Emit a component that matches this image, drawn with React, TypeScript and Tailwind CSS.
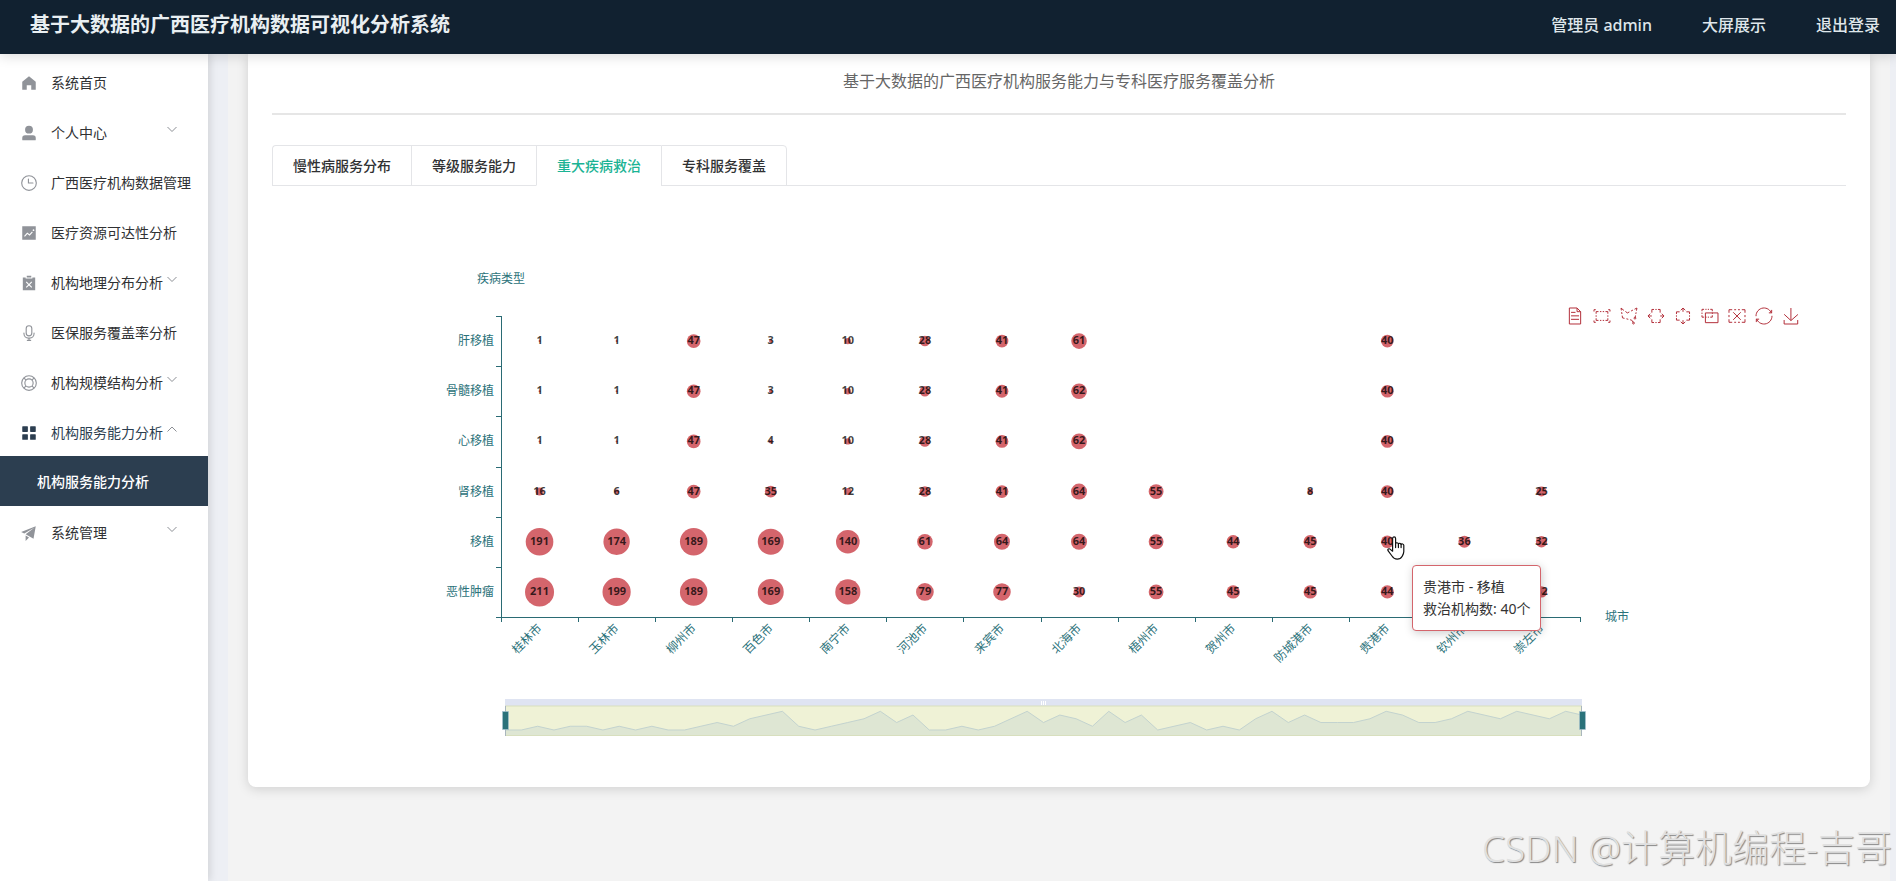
import { useState } from "react";
import type { ReactNode } from "react";
import clsx from "clsx";

const CITIES = [
  "桂林市", "玉林市", "柳州市", "百色市", "南宁市", "河池市", "来宾市",
  "北海市", "梧州市", "贺州市", "防城港市", "贵港市", "钦州市", "崇左市",
];

const DISEASES = ["恶性肿瘤", "移植", "肾移植", "心移植", "骨髓移植", "肝移植"];

// one row per city, values in the order of DISEASES
const COUNTS: (number | null)[][] = [
  [211, 191, 16, 1, 1, 1],
  [199, 174, 6, 1, 1, 1],
  [189, 189, 47, 47, 47, 47],
  [169, 169, 35, 4, 3, 3],
  [158, 140, 12, 10, 10, 10],
  [79, 61, 28, 28, 28, 28],
  [77, 64, 41, 41, 41, 41],
  [30, 64, 64, 62, 62, 61],
  [55, 55, 55, null, null, null],
  [45, 44, null, null, null, null],
  [45, 45, 8, null, null, null],
  [44, 40, 40, 40, 40, 40],
  [null, 36, null, null, null, null],
  [32, 32, 25, null, null, null],
];

// overview line inside the zoom slider
const OVERVIEW = [
  0, 0, 1, 0, 1, 1, 0, 1, 0, 1, 0, 0, 1, 2, 1, 3, 4, 5, 1, 0, 1, 2, 3, 5, 2, 4,
  0, 0, 1, 0, 1, 3, 5, 2, 4, 3, 1, 5, 2, 4, 0, 1, 2, 0, 1, 0, 3, 5, 2, 4, 2, 2,
  2, 3, 5, 4, 2, 2, 3, 5, 4, 3, 5, 4, 3, 5, 4,
];

const GRID = { left: 229, right: 1308, top: 114, bottom: 415 };
const SLIDER = { left: 233, right: 1310, top: 504, bottom: 534 };

const TABS = ["慢性病服务分布", "等级服务能力", "重大疾病救治", "专科服务覆盖"];

const TOOLS = [
  {
    label: "数据视图",
    viewBox: "11.5 2 39.5 56",
    path: "M17.5,17.3H33 M45.4,29.5h-28 M11.5,2v56H51V14.8L38.4,2H11.5z M38.4,2.2v12.7H51 M45.4,41.7h-28",
  },
  {
    label: "矩形选择",
    viewBox: "0.4 -0.2 89.2 70.4",
    path: "M0.4,10V-0.2h9.8 M89.6,10V-0.2h-9.8 M0.4,60v10.2h9.8 M89.6,60v10.2h-9.8 M12.3,22.4V10.5h13.1 M33.6,10.5h7.8 M49.1,10.5h7.8 M77.5,22.4V10.5h-13 M12.3,31.1v8.2 M77.7,31.1v8.2 M12.3,47.6v11.9h13.1 M33.6,59.5h7.6 M49.1,59.5h7.7 M77.5,47.6v11.9h-13",
  },
  {
    label: "圈选",
    viewBox: "9.7 4.8 52 52.4",
    path: "M55.2,34.9c1.7,0,3.1,1.4,3.1,3.1s-1.4,3.1-3.1,3.1s-3.1-1.4-3.1-3.1S53.5,34.9,55.2,34.9z M50.4,51c1.7,0,3.1,1.4,3.1,3.1c0,1.7-1.4,3.1-3.1,3.1c-1.7,0-3.1-1.4-3.1-3.1C47.3,52.4,48.7,51,50.4,51z M55.6,37.1l1.5-7.8 M60.1,13.5l1.6-8.7l-7.8,4 M59,19l-1,5.3 M24,16.1l6.4,4.9l6.4-3.3 M48.5,11.6l-5.9,3.1 M19.1,12.8L9.7,5.1l1.1,7.7 M13.4,29.8l1,7.3l6.6,1.6 M11.6,18.4l1,6.1 M27.3,40.2l6.1,1.6 M49.9,52.1l-5.6-7.6l-4.9-1.2",
  },
  {
    label: "横向选择",
    viewBox: "3.1 1.9 68.8 56.2",
    path: "M19.7,15.6V1.9H29 M34.8,1.9H40.4 M55.3,15.6V1.9H45.9 M19.7,44.4V58.1H29 M34.8,58.1H40.4 M55.3,44.4V58.1H45.9 M12.5,20.3l-9.4,9.6l9.6,9.8 M3.1,29.9h16.5 M62.5,20.3l9.4,9.6L62.3,39.7 M71.9,29.9H55.4",
  },
  {
    label: "纵向选择",
    viewBox: "11.8 -3.9 54.1 66.2",
    path: "M52.7,12h13.2v9 M65.9,26.6V32 M52.7,46.3h13.2v-9 M24.9,12H11.8v9 M11.8,26.6V32 M24.9,46.3H11.8v-9 M48.2,5.1l-9.3-9l-9.4,9.2 M38.9-3.9V12 M48.2,53.3l-9.3,9l-9.4-9.2 M38.9,62.3V46.4",
  },
  {
    label: "保持选择",
    viewBox: "4 1 79.9 66.5",
    path: "M4,10.5V1h10.3 M20.7,1h6.1 M33,1h6.1 M55.4,10.5V1H45.2 M4,17.3v6.6 M55.6,17.3v6.6 M4,30.5V40h10.3 M20.7,40h6.1 M33,40h6.1 M55.4,30.5V40H45.2 M21,18.9h62.9v48.6H21V18.9z",
  },
  {
    label: "清除选择",
    viewBox: "4.7 4.2 65.6 51.6",
    path: "M22,14.7l30.9,31 M52.9,14.7L22,45.7 M4.7,16.8V4.2h13.1 M26,4.2h7.8 M41.6,4.2h7.8 M70.3,16.8V4.2H57.2 M4.7,25.9v8.6 M70.3,25.9v8.6 M4.7,43.2v12.6h13.1 M26,55.8h7.8 M41.6,55.8h7.8 M70.3,43.2v12.6H57.2",
  },
  {
    label: "还原",
    viewBox: "2.1 2 55.8 56",
    path: "M47,18.9h9.8V8.7 M56.3,20.1C52.1,9,40.5,0.6,26.8,2.1C12.6,3.7,1.6,16.2,2.1,30.6 M13,41.1H3.1v10.2 M3.7,39.9c4.2,11.1,15.8,19.5,29.5,18c14.2-1.6,25.2-14.1,24.7-28.5",
  },
  {
    label: "保存为图片",
    viewBox: "0.5 0 58 58",
    path: "M4.7,22.9L29.3,45.5L54.7,23.4M4.6,43.6L4.6,58L53.8,58L53.8,43.6M29.2,45.1L29.2,0",
  },
];

interface MenuEntry {
  label: string;
  icon: ReactNode;
  arrow?: "down" | "up";
  children?: string[];
}

const MENU: MenuEntry[] = [
  {
    label: "系统首页",
    icon: <path d="M512 128 128 447.936V896h255.936V640H640v256h255.936V447.936z" />,
  },
  {
    label: "个人中心",
    icon: (
      <path d="M288 320a224 224 0 1 0 448 0 224 224 0 1 0-448 0m544 608H160a32 32 0 0 1-32-32v-96a160 160 0 0 1 160-160h448a160 160 0 0 1 160 160v96a32 32 0 0 1-32 32z" />
    ),
    arrow: "down",
  },
  {
    label: "广西医疗机构数据管理",
    icon: (
      <g fill="none" stroke="currentColor" strokeWidth="64" strokeLinecap="round">
        <circle cx="512" cy="512" r="416" />
        <path d="M480 288v224h256" />
      </g>
    ),
  },
  {
    label: "医疗资源可达性分析",
    icon: (
      <path d="M128 896V128h768v768zm291.712-327.296 128 102.4 180.16-201.792-47.744-42.624-139.84 156.608-128-102.4-180.16 201.792 47.744 42.624 139.84-156.608zM816 352a48 48 0 1 0-96 0 48 48 0 0 0 96 0" />
    ),
  },
  {
    label: "机构地理分布分析",
    icon: (
      <path d="m557.248 608 135.744-135.744-45.248-45.248-135.68 135.744-135.808-135.68-45.248 45.184L466.752 608l-135.68 135.68 45.184 45.312L512 653.248l135.744 135.744 45.248-45.248L557.312 608zM704 192h160v736H160V192h160v64h384zm-320 0V96h256v96z" />
    ),
    arrow: "down",
  },
  {
    label: "医保服务覆盖率分析",
    icon: (
      <path d="M512 128a128 128 0 0 0-128 128v256a128 128 0 1 0 256 0V256a128 128 0 0 0-128-128m0-64a192 192 0 0 1 192 192v256a192 192 0 1 1-384 0V256A192 192 0 0 1 512 64m-32 832v-64a288 288 0 0 1-288-288v-32a32 32 0 0 1 64 0v32a224 224 0 0 0 224 224h64a224 224 0 0 0 224-224v-32a32 32 0 1 1 64 0v32a288 288 0 0 1-288 288v64h64a32 32 0 1 1 0 64H416a32 32 0 1 1 0-64z" />
    ),
  },
  {
    label: "机构规模结构分析",
    icon: (
      <g fill="none" stroke="currentColor" strokeWidth="64">
        <circle cx="512" cy="512" r="416" />
        <circle cx="512" cy="512" r="236" />
        <path d="M218 218l127 127M806 218L679 345M218 806l127-127M806 806L679 679" />
      </g>
    ),
    arrow: "down",
  },
  {
    label: "机构服务能力分析",
    icon: (
      <path d="M160 448a32 32 0 0 1-32-32V160a32 32 0 0 1 32-32h256a32 32 0 0 1 32 32v256a32 32 0 0 1-32 32zm448 0a32 32 0 0 1-32-32V160a32 32 0 0 1 32-32h256a32 32 0 0 1 32 32v256a32 32 0 0 1-32 32zM160 896a32 32 0 0 1-32-32V608a32 32 0 0 1 32-32h256a32 32 0 0 1 32 32v256a32 32 0 0 1-32 32zm448 0a32 32 0 0 1-32-32V608a32 32 0 0 1 32-32h256a32 32 0 0 1 32 32v256a32 32 0 0 1-32 32z" />
    ),
    arrow: "up",
    children: ["机构服务能力分析"],
  },
  {
    label: "系统管理",
    icon: (
      <path d="m64 448 832-320-128 704-446.08-243.328L832 192 242.816 545.472zm256 512V657.024L512 768z" />
    ),
    arrow: "down",
  },
];

function Header() {
  return (
    <header className="relative z-10 flex h-[54px] shrink-0 items-center justify-between bg-[#112130] pr-4 pb-1 pl-[30px] text-[#dfe6ea] shadow-[0_2px_12px_rgba(0,0,0,0.15)]">
      <h1 className="text-xl font-bold text-[#e9eff2]">
        基于大数据的广西医疗机构数据可视化分析系统
      </h1>
      <nav className="flex gap-[50px] text-base font-medium">
        <button type="button">管理员 admin</button>
        <a href="#screen">大屏展示</a>
        <a href="#logout">退出登录</a>
      </nav>
    </header>
  );
}

function Sidebar() {
  return (
    <aside className="relative w-52 shrink-0 bg-white pt-0.5 text-sm text-[#303133] shadow-[2px_0_8px_rgba(0,0,0,0.12)]">
      <ul>
        {MENU.map((item) => (
          <li key={item.label}>
            <button
              type="button"
              className={clsx(
                "relative flex h-[50px] w-full items-center gap-[13px] pt-1 pl-5 text-left whitespace-nowrap",
                item.children && "text-[#2c3e50]"
              )}
            >
              <svg
                viewBox="0 0 1024 1024"
                fill="currentColor"
                className={clsx("size-[18px] shrink-0", !item.children && "text-[#909399]")}
              >
                {item.icon}
              </svg>
              {item.label}
              {item.arrow && (
                <svg
                  viewBox="0 0 12 12"
                  className="absolute top-[17px] right-[30px] size-3 text-[#8c8f95]"
                  fill="none"
                  stroke="currentColor"
                >
                  <path d={item.arrow === "down" ? "M1.5 4 6 8.5 10.5 4" : "M1.5 8.5 6 4 10.5 8.5"} />
                </svg>
              )}
            </button>
            {item.children?.map((child) => (
              <a
                key={child}
                href="#service"
                className="flex h-[50px] items-center bg-[#2c3e50] pt-0.5 pl-[37px] font-medium text-white"
              >
                {child}
              </a>
            ))}
          </li>
        ))}
      </ul>
    </aside>
  );
}

function BubbleChart() {
  const stepX = (GRID.right - GRID.left) / CITIES.length;
  const stepY = (GRID.bottom - GRID.top) / DISEASES.length;
  const centerX = (i: number) => GRID.left + stepX * (i + 0.5);
  const centerY = (i: number) => GRID.bottom - stepY * (i + 0.5);
  const sliderStep = (SLIDER.right - SLIDER.left) / (OVERVIEW.length - 1);
  const points = OVERVIEW.map(
    (v, i) => `${SLIDER.left + i * sliderStep},${528 - v * 3.74}`
  ).join(" ");

  return (
    <svg viewBox="0 0 1574 561" className="block h-auto w-full" role="img" aria-label="重大疾病救治">
      {/* Axes */}
      <g stroke="#2a6b74" fill="none" shapeRendering="crispEdges">
        <path d={`M${GRID.left + 0.5} ${GRID.top}V${GRID.bottom + 0.5}H${GRID.right}`} />
        {DISEASES.concat("").map((_, i) => (
          <path key={i} d={`M${GRID.left - 5} ${Math.round(GRID.top + i * stepY) + 0.5}h5`} />
        ))}
        {CITIES.concat("").map((_, i) => (
          <path key={i} d={`M${Math.round(GRID.left + i * stepX) + 0.5} ${GRID.bottom}v5`} />
        ))}
      </g>

      <g className="fill-[#2b727a] text-xs">
        <text x={GRID.left} y="81" textAnchor="middle">疾病类型</text>
        <text x={GRID.right + 25} y={GRID.bottom + 4}>城市</text>
        {DISEASES.map((name, i) => (
          <text key={name} x={GRID.left - 7} y={centerY(i) + 4} textAnchor="end">
            {name}
          </text>
        ))}
        {CITIES.map((name, i) => (
          <text
            key={name}
            textAnchor="end"
            transform={`translate(${centerX(i) + 3} ${GRID.bottom + 12}) rotate(-45)`}
          >
            {name}
          </text>
        ))}
      </g>

      {/* Bubbles, the area grows with the count */}
      {COUNTS.map((row, x) =>
        row.map((value, y) =>
          value === null ? null : (
            <g key={`${x}-${y}`}>
              <circle cx={centerX(x)} cy={centerY(y)} r={Math.sqrt(value)} fill="#d4656c" />
              <text
                x={centerX(x)}
                y={centerY(y) + 3}
                textAnchor="middle"
                className="fill-black/75 text-[11px] font-bold"
              >
                {value}
              </text>
            </g>
          )
        )
      )}

      {/* Zoom slider */}
      <rect x={SLIDER.left} y="497" width={SLIDER.right - SLIDER.left} height="7" fill="#dfe4f2" />
      <path d="M769.5 499v4M771.5 499v4M773.5 499v4" stroke="#fff" />
      <rect
        x={SLIDER.left}
        y={SLIDER.top}
        width={SLIDER.right - SLIDER.left}
        height={SLIDER.bottom - SLIDER.top}
        fill="#eff2d6"
      />
      <polygon
        points={`${SLIDER.left},${SLIDER.bottom} ${points} ${SLIDER.right},${SLIDER.bottom}`}
        fill="#dee6d3"
      />
      <polyline points={points} fill="none" stroke="#c3d3cf" />
      <path
        d={`M${SLIDER.left} ${SLIDER.top}H${SLIDER.right}M${SLIDER.left} ${SLIDER.bottom - 0.5}H${SLIDER.right}`}
        stroke="#d8dfbe"
      />
      <path
        d={`M${SLIDER.left + 0.5} ${SLIDER.top}V${SLIDER.bottom}M${SLIDER.right - 0.5} ${SLIDER.top}V${SLIDER.bottom}`}
        stroke="#a9b6bd"
      />
      {[SLIDER.left, SLIDER.right].map((x) => (
        <rect key={x} x={x - 2.5} y="509.5" width="6" height="18" fill="#2a727a" stroke="#a9c3d2" strokeWidth="0.6" />
      ))}
    </svg>
  );
}

function Toolbox() {
  return (
    <div className="absolute top-[106px] right-[47px] flex gap-[11px] text-[#b3303b]">
      {TOOLS.map((tool) => (
        <button key={tool.label} type="button" aria-label={tool.label} className="size-4">
          <svg
            viewBox={tool.viewBox}
            className="size-4 overflow-visible"
            fill="none"
            stroke="currentColor"
          >
            <path d={tool.path} vectorEffect="non-scaling-stroke" />
          </svg>
        </button>
      ))}
    </div>
  );
}

function HandCursor() {
  return (
    <svg
      viewBox="0 0 18 24"
      className="pointer-events-none absolute top-[334px] left-[1115px] h-6 w-[18px]"
      fill="#fff"
      stroke="#111"
      strokeWidth="1.2"
      strokeLinejoin="round"
      strokeLinecap="round"
    >
      <path d="M5.6 15.2V2.4a1.5 1.5 0 0 1 3 0v5.2c.3-1.2 2.5-1.1 2.8.3.5-1 2.5-.8 2.7.5.6-.8 2.6-.5 2.7 1v6.2c0 2-.8 3.2-1.6 4.6-1 1.8-2.4 2.9-5 2.9-2.7 0-4-1.1-5.2-3.1L1 14.6c-.6-1.5.8-2.3 2-1.5z" />
      <path d="M8.6 7.6v4M11.4 7.9v3.7M14.1 8.4v3.2" />
    </svg>
  );
}

export default function App() {
  const [activeTab, setActiveTab] = useState(2);

  return (
    <div className="relative flex min-h-screen flex-col overflow-hidden bg-[#edeff4] font-['Noto_Sans','Noto_Sans_CJK_SC',sans-serif]">
      <Header />

      <div className="flex flex-1">
        <Sidebar />

        <main className="mr-1.5 ml-5 min-w-0 flex-1 bg-[#f3f3f3] px-5">
          <section className="rounded-b-lg bg-white px-6 pb-6 shadow-[0_2px_12px_rgba(0,0,0,0.15)]">
            <p className="border-b-2 border-[#e6e6e6] pt-[15px] pb-5 text-center text-base text-[#666]">
              基于大数据的广西医疗机构服务能力与专科医疗服务覆盖分析
            </p>

            {/* Tabs */}
            <div role="tablist" className="mt-[30px] flex border-b border-[#e4e5e8]">
              {TABS.map((tab, i) => (
                <button
                  key={tab}
                  type="button"
                  role="tab"
                  aria-selected={activeTab === i}
                  onClick={() => setActiveTab(i)}
                  className={clsx(
                    "-mb-px h-[41px] border-t border-b border-l border-[#e4e5e8] px-5 text-sm font-medium",
                    "first:rounded-tl last:rounded-tr last:border-r",
                    activeTab === i ? "border-b-white text-[#1bb394]" : "text-[#303133]"
                  )}
                >
                  {tab}
                </button>
              ))}
            </div>

            {/* Chart */}
            <div className="relative mt-4">
              <BubbleChart />
              <Toolbox />
              <HandCursor />
              <div className="absolute top-[363px] left-[1140px] rounded border border-[#d4656c] bg-white p-2.5 text-sm leading-[22px] whitespace-nowrap text-[#333] shadow-[1px_2px_10px_rgba(0,0,0,0.2)]">
                贵港市 - 移植
                <br />
                救治机构数: 40个
              </div>
            </div>
          </section>
        </main>
      </div>

      <div className="pointer-events-none absolute right-1 bottom-1.5 text-[37px] leading-[54px] font-light whitespace-nowrap text-[#e0e0e0] [text-shadow:1px_1px_1px_#858585]">
        CSDN @计算机编程-吉哥
      </div>
    </div>
  );
}
